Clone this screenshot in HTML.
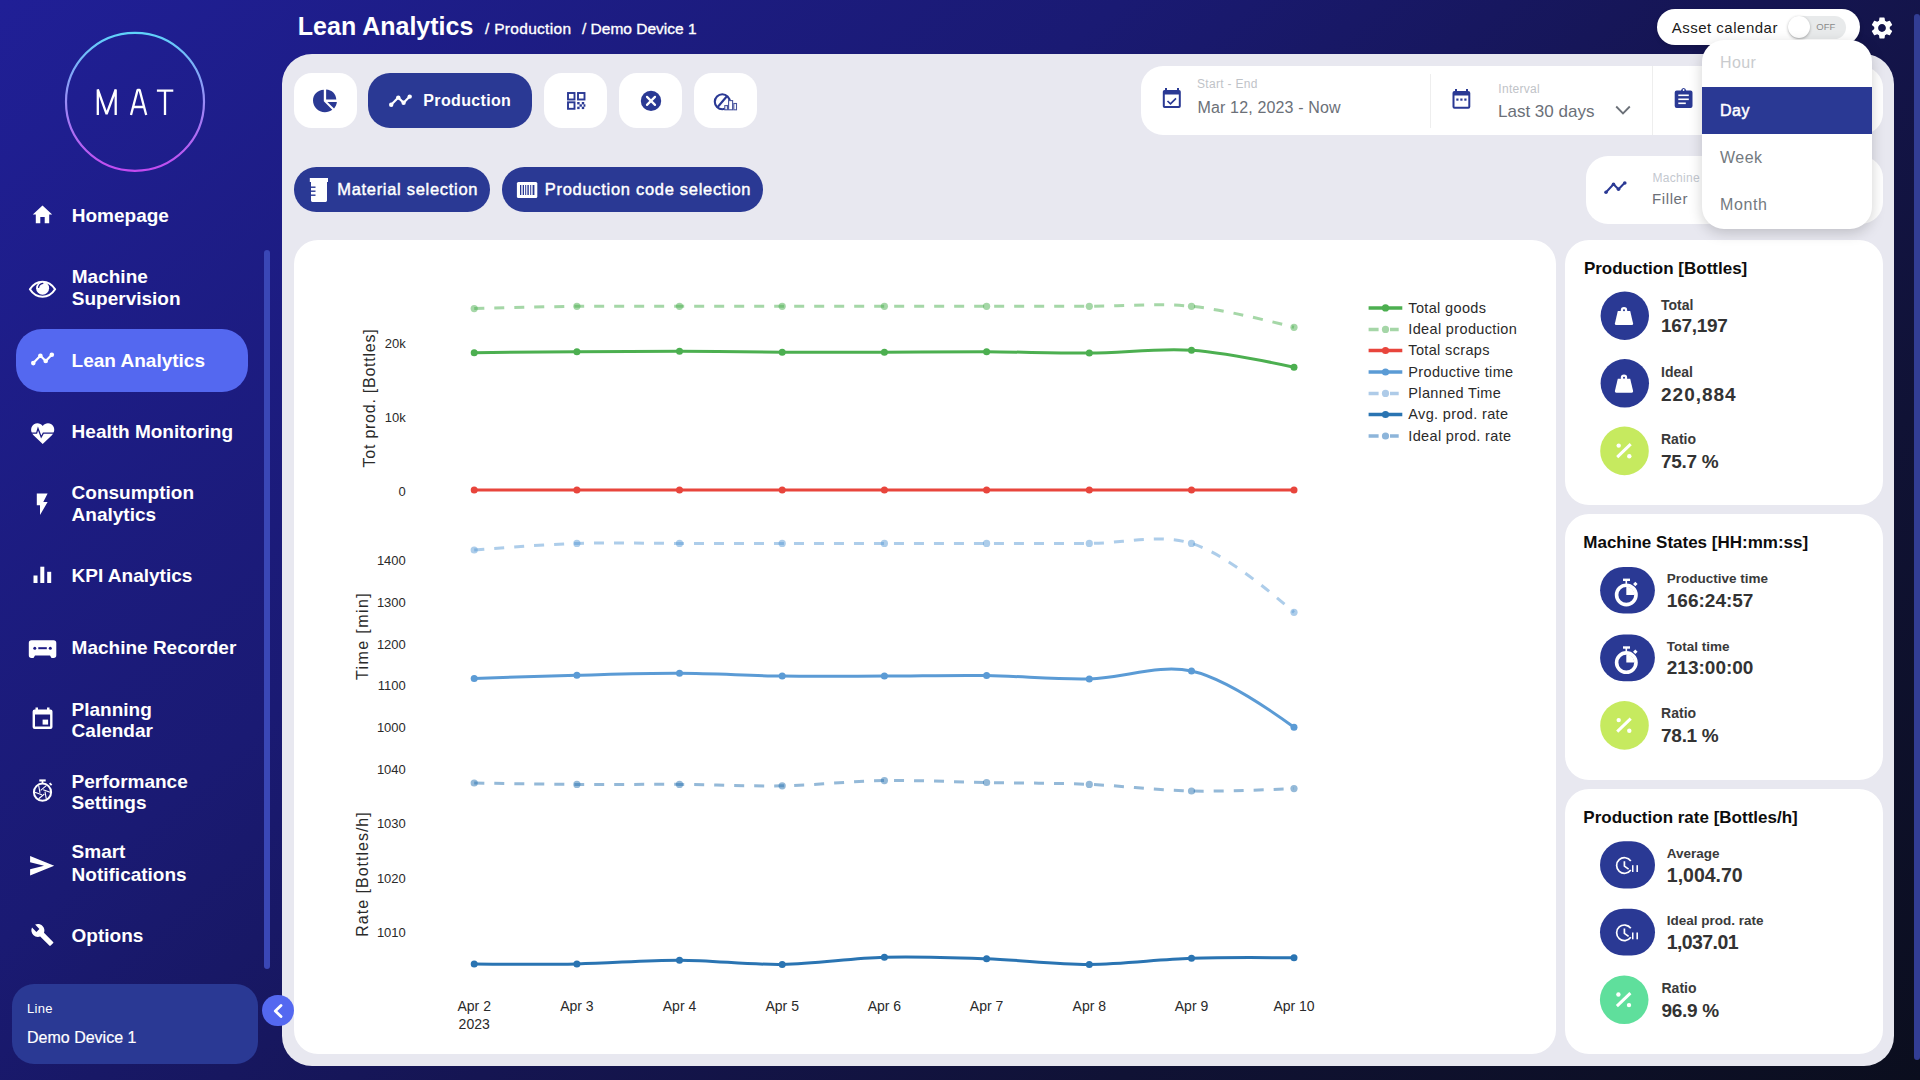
<!DOCTYPE html>
<html><head><meta charset="utf-8"><title>Lean Analytics</title>
<style>
*{margin:0;padding:0;box-sizing:border-box}
html,body{width:1920px;height:1080px;overflow:hidden}
body{position:relative;font-family:"Liberation Sans",sans-serif;background:linear-gradient(140deg,#201f96 0%,#1a1a73 35%,#151552 55%,#101235 75%,#0b0e1e 100%)}
.abs{position:absolute}
.t{position:absolute;white-space:nowrap;line-height:1}
.card{position:absolute;background:#fff;border-radius:20px}
.navy{background:#2a3994}
svg{overflow:visible}
</style></head><body>

<!-- ============ SIDEBAR ============ -->
<svg class="abs" style="left:0;top:0" width="282" height="1080">
  <defs>
    <linearGradient id="lg" x1="0" y1="0" x2="0" y2="1">
      <stop offset="0" stop-color="#5fd3fa"/><stop offset="0.5" stop-color="#9a8cf6"/><stop offset="1" stop-color="#c34af0"/>
    </linearGradient>
  </defs>
  <circle cx="135" cy="101.8" r="69" fill="none" stroke="url(#lg)" stroke-width="2.2"/>
  <g fill="none" stroke="#fff" stroke-width="2.3" stroke-linejoin="bevel">
    <path d="M97.8 115V89.5L106.6 114.2L115.7 89.5V115"/>
    <path d="M131 115L137.6 89.9H139.6L146.2 115M133.2 107H143.6"/>
    <path d="M156.9 90.6H173.3M165 90.6V115"/>
  </g>
</svg>

<div class="abs" style="left:16.3px;top:329px;width:231.5px;height:63px;border-radius:26px;background:#5468f0"></div>
<div class="abs" style="left:264px;top:250.4px;width:6px;height:719px;border-radius:3px;background:#3a47b6"></div>

<!-- nav icons -->
<svg class="abs" style="left:0;top:0" width="282" height="1080" fill="#fff">
  <!-- home -->
  <path d="M42.5 205.5L32.8 214.5H35.8V223.3H40.3V217H44.7V223.3H49.2V214.5H52.2Z"/>
  <!-- eye -->
  <path d="M29.9 289.3C34 283 38 281.8 42.5 281.8C47 281.8 51 283 55.1 289.3C51 295.6 47 296.8 42.5 296.8C38 296.8 34 295.6 29.9 289.3Z" fill="none" stroke="#fff" stroke-width="2.1" stroke-linejoin="round"/>
  <circle cx="42.6" cy="288.2" r="6.5"/>
  <path d="M38.6 287.4Q39 284 42.8 283.3" fill="none" stroke="#1e1c86" stroke-width="1.3" stroke-linecap="round"/>
  <!-- trend (active) -->
  <path d="M33.3 363.1L40.4 355.7L45.7 361L51.8 354.7" fill="none" stroke="#fff" stroke-width="2.2" stroke-linejoin="round"/>
  <circle cx="33.3" cy="363.1" r="2.3"/><circle cx="40.4" cy="355.7" r="2.3"/><circle cx="45.7" cy="361" r="2.3"/><circle cx="51.8" cy="354.7" r="2.3"/>
  <!-- heart -->
  <path d="M42.7 444L33.5 435.3C30 431.8 30.6 426.5 34 424.3C37 422.4 40.6 423.3 42.7 426C44.8 423.3 48.4 422.4 51.4 424.3C54.8 426.5 55.4 431.8 51.9 435.3Z"/>
  <path d="M30.5 433.2H36.6L38 428.6L41.2 437L43.3 433.2H55" fill="none" stroke="#1d1c82" stroke-width="1.3" stroke-linejoin="miter"/>
  <!-- bolt -->
  <path d="M36.8 493.5V505.3H40V515L47.6 502.1H43.3L47.6 493.5Z"/>
  <!-- kpi bars -->
  <rect x="33.5" y="575.5" width="4" height="7.5"/><rect x="40.3" y="566.7" width="4" height="16.3"/><rect x="47.2" y="571.8" width="4" height="11.2"/>
  <!-- recorder -->
  <path d="M31.5 640.2H53.6Q56.3 640.2 56.3 643V655.3Q56.3 658 53.6 658H51.5L50 655.5H35L33.5 658H31.5Q28.8 658 28.8 655.3V643Q28.8 640.2 31.5 640.2Z"/>
  <g fill="#1e1c86"><circle cx="34.8" cy="648.2" r="1.5"/><circle cx="50.3" cy="648.2" r="1.5"/><rect x="38.3" y="647.2" width="8.5" height="2"/></g>
  <!-- calendar -->
  <path d="M35.5 707.5H38V709.5H47V707.5H49.5V709.5H50.5Q52.5 709.5 52.5 711.5V726.9Q52.5 728.9 50.5 728.9H34.6Q32.6 728.9 32.6 726.9V711.5Q32.6 709.5 34.6 709.5H35.5ZM35 714.5V726.5H50.1V714.5Z"/>
  <rect x="42.6" y="719.6" width="5.5" height="5"/>
  <!-- perf stopwatch -->
  <rect x="39.3" y="779.4" width="6.4" height="2.1"/><rect x="41.7" y="781" width="1.6" height="2.5"/>
  <circle cx="42.5" cy="792.2" r="8.6" fill="none" stroke="#fff" stroke-width="2"/>
  <path d="M45.01 791.53L46.30 798.78M44.34 794.04L38.70 798.78M41.83 794.71L34.90 792.20M39.99 792.87L38.70 785.62M40.66 790.36L46.30 785.62M43.17 789.69L50.10 792.20" fill="none" stroke="#fff" stroke-width="1.1"/>
  <path d="M49.6 783.2L51.6 785.2" stroke="#fff" stroke-width="1.8"/>
  <!-- send -->
  <path d="M30.1 856.1L54.2 865.8L30.1 875.4V869.2L44 865.8L30.1 862.3Z"/>
  <!-- wrench -->
  <path transform="translate(30.4 922.9)" d="M22.7 19l-9.1-9.1c.9-2.3.4-5-1.5-6.9-2-2-5-2.4-7.4-1.3L9 6 6 9 1.6 4.7C.4 7.1.9 10.1 2.9 12.1c1.9 1.9 4.6 2.4 6.9 1.5l9.1 9.1c.4.4 1 .4 1.4 0l2.3-2.3c.5-.4.5-1.1.1-1.4z"/>
  <!-- collapse chevron button -->
</svg>

<div class="t" style="left:71.8px;top:206.1px;font-size:19px;color:#fff;font-weight:700;">Homepage</div>
<div class="t" style="left:71.8px;top:266.9px;font-size:19px;color:#fff;font-weight:700;">Machine</div>
<div class="t" style="left:71.8px;top:289.1px;font-size:19px;color:#fff;font-weight:700;">Supervision</div>
<div class="t" style="left:71.6px;top:350.8px;font-size:19px;color:#fff;font-weight:700;">Lean Analytics</div>
<div class="t" style="left:71.6px;top:421.9px;font-size:19px;color:#fff;font-weight:700;">Health Monitoring</div>
<div class="t" style="left:71.6px;top:483.3px;font-size:19px;color:#fff;font-weight:700;">Consumption</div>
<div class="t" style="left:71.6px;top:504.9px;font-size:19px;color:#fff;font-weight:700;">Analytics</div>
<div class="t" style="left:71.6px;top:566.0px;font-size:19px;color:#fff;font-weight:700;">KPI Analytics</div>
<div class="t" style="left:71.6px;top:638.0px;font-size:19px;color:#fff;font-weight:700;">Machine Recorder</div>
<div class="t" style="left:71.6px;top:699.7px;font-size:19px;color:#fff;font-weight:700;">Planning</div>
<div class="t" style="left:71.6px;top:721.1px;font-size:19px;color:#fff;font-weight:700;">Calendar</div>
<div class="t" style="left:71.6px;top:771.5px;font-size:19px;color:#fff;font-weight:700;">Performance</div>
<div class="t" style="left:71.6px;top:793.1px;font-size:19px;color:#fff;font-weight:700;">Settings</div>
<div class="t" style="left:71.6px;top:842.4px;font-size:19px;color:#fff;font-weight:700;">Smart</div>
<div class="t" style="left:71.6px;top:864.6px;font-size:19px;color:#fff;font-weight:700;">Notifications</div>
<div class="t" style="left:71.6px;top:925.5px;font-size:19px;color:#fff;font-weight:700;">Options</div>

<div class="abs" style="left:12.2px;top:983.8px;width:245.6px;height:80px;border-radius:22px;background:#2a3994"></div>
<div class="t" style="left:27.0px;top:1002.0px;font-size:13px;color:#fff;font-weight:400;letter-spacing:0.3px;">Line</div>
<div class="t" style="left:27.0px;top:1029.5px;font-size:16px;color:#fff;font-weight:400;-webkit-text-stroke:0.2px #fff;">Demo Device 1</div>

<!-- ============ HEADER ============ -->
<div class="t" style="left:297.8px;top:14.0px;font-size:25px;color:#fff;font-weight:700;">Lean Analytics</div>
<div class="t" style="left:485.0px;top:20.5px;font-size:15.5px;color:#fff;font-weight:400;letter-spacing:0.3px;-webkit-text-stroke:0.35px #fff;">/ Production</div>
<div class="t" style="left:582.0px;top:20.5px;font-size:15.5px;color:#fff;font-weight:400;-webkit-text-stroke:0.35px #fff;">/ Demo Device 1</div>

<div class="abs" style="left:1657px;top:8.8px;width:203px;height:36px;border-radius:18px;background:#fff;box-shadow:0 2px 4px rgba(0,0,0,.15)"></div>
<div class="t" style="left:1671.7px;top:19.5px;font-size:15px;color:#1a1a1a;font-weight:400;letter-spacing:0.5px;">Asset calendar</div>
<div class="abs" style="left:1788px;top:15.6px;width:58px;height:23px;border-radius:12px;background:#e8eaeb"></div>
<div class="abs" style="left:1788px;top:16px;width:22px;height:22px;border-radius:11px;background:#fff;box-shadow:0 1px 3px rgba(0,0,0,.3)"></div>
<div class="t" style="left:1816.3px;top:22.0px;font-size:9.5px;color:#8a8a8a;font-weight:400;">OFF</div>
<svg class="abs" style="left:1869px;top:15.3px" width="26" height="26" viewBox="0 0 24 24" fill="#fff">
  <path d="M19.14 12.94c.04-.3.06-.61.06-.94 0-.32-.02-.64-.07-.94l2.03-1.58a.49.49 0 0 0 .12-.61l-1.92-3.32a.488.488 0 0 0-.59-.22l-2.39.96c-.5-.38-1.03-.7-1.62-.94l-.36-2.54a.484.484 0 0 0-.48-.41h-3.84c-.24 0-.43.17-.47.41l-.36 2.54c-.59.24-1.13.57-1.62.94l-2.39-.96c-.22-.08-.47 0-.59.22L2.74 8.87c-.12.21-.08.47.12.61l2.03 1.58c-.05.3-.09.63-.09.94s.02.64.07.94l-2.03 1.58a.49.49 0 0 0-.12.61l1.92 3.32c.12.22.37.29.59.22l2.39-.96c.5.38 1.03.7 1.62.94l.36 2.54c.05.24.24.41.48.41h3.84c.24 0 .44-.17.47-.41l.36-2.54c.59-.24 1.13-.56 1.62-.94l2.39.96c.22.08.47 0 .59-.22l1.92-3.32c.12-.22.07-.47-.12-.61l-2.01-1.58zM12 15.6c-1.98 0-3.6-1.62-3.6-3.6s1.62-3.6 3.6-3.6 3.6 1.62 3.6 3.6-1.62 3.6-3.6 3.6z"/>
</svg>

<!-- page scrollbar -->
<div class="abs" style="left:1913.5px;top:14px;width:6.5px;height:1046px;border-radius:3px;background:#323d94"></div>

<!-- ============ MAIN PANEL ============ -->
<div class="abs" style="left:281.8px;top:54px;width:1612.2px;height:1012px;border-radius:30px;background:#e8e8f0"></div>

<!-- collapse button -->
<div class="abs" style="left:262.2px;top:994.8px;width:31.5px;height:31.5px;border-radius:50%;background:#5468f0"></div>
<svg class="abs" style="left:0;top:0" width="300" height="1080"><path d="M281 1005.5L275.3 1011L281 1016.5" fill="none" stroke="#fff" stroke-width="2.8" stroke-linecap="round" stroke-linejoin="round"/></svg>

<!-- top toolbar buttons -->
<div class="card" style="left:294px;top:73px;width:63px;height:54.7px;border-radius:18px"></div>
<div class="card navy" style="left:367.8px;top:73px;width:164px;height:54.7px;border-radius:22px"></div>
<div class="card" style="left:544px;top:73px;width:63px;height:54.7px;border-radius:18px"></div>
<div class="card" style="left:619px;top:73px;width:62.7px;height:54.7px;border-radius:18px"></div>
<div class="card" style="left:694px;top:73px;width:62.7px;height:54.7px;border-radius:18px"></div>
<svg class="abs" style="left:0;top:0" width="800" height="240">
  <!-- pie -->
  <g fill="#2a3994">
    <path d="M323.8 89.8V101.2L332.3 109.7C330.3 111.3 327.6 112.2 324.9 112.2C318.4 112.2 313 106.9 313 100.4C313 94.7 317.6 90.2 323.8 89.8Z"/>
    <path d="M326.1 89.4C331.9 89.6 336.1 94 336.3 99.6H326.1Z"/>
    <path d="M327.4 101.9H336.9C336.6 104.4 335.6 106.6 334 108.5Z"/>
  </g>
  <!-- production trend icon -->
  <path d="M391.2 104.8L398.3 97.6L403.6 102.8L409.7 96.6" fill="none" stroke="#fff" stroke-width="2.2" stroke-linejoin="round"/>
  <g fill="#fff"><circle cx="391.2" cy="104.8" r="2.2"/><circle cx="398.3" cy="97.6" r="2.2"/><circle cx="403.6" cy="102.8" r="2.2"/><circle cx="409.7" cy="96.6" r="2.2"/></g>
  <!-- qr -->
  <g fill="none" stroke="#2a3994" stroke-width="1.9">
    <rect x="568" y="93" width="6.5" height="6.5"/><rect x="578" y="93" width="6.5" height="6.5"/><rect x="568" y="102.3" width="6.5" height="6.5"/>
  </g>
  <g fill="#2a3994"><rect x="577.2" y="102" width="2.4" height="2.4"/><rect x="581.8" y="102" width="2.4" height="2.4"/><rect x="579.5" y="104.3" width="2.4" height="2.4"/><rect x="577.2" y="106.7" width="2.4" height="2.4"/><rect x="581.8" y="106.7" width="2.4" height="2.4"/><rect x="583.6" y="104.3" width="1.8" height="2.4"/></g>
  <!-- x circle -->
  <circle cx="651" cy="100.9" r="10.2" fill="#2a3994"/>
  <path d="M647 96.9L655 104.9M655 96.9L647 104.9" stroke="#fff" stroke-width="2.2" stroke-linecap="round"/>
  <!-- speed/bars icon -->
  <g fill="none" stroke="#2a3994" stroke-width="2.1"><circle cx="722.3" cy="101.8" r="7.5"/><path d="M717.7 107L726.9 96.3"/></g>
  <g fill="#fff" stroke="#4a569f" stroke-width="1.1"><rect x="724.8" y="105.6" width="2.6" height="4.2"/><rect x="728.6" y="100.6" width="4" height="9.2"/><rect x="733.8" y="103.5" width="2.7" height="6.3"/></g>
</svg>
<div class="t" style="left:423.3px;top:93.3px;font-size:16px;color:#fff;font-weight:700;letter-spacing:0.35px;">Production</div>

<!-- material buttons -->
<div class="card navy" style="left:294px;top:167px;width:195.5px;height:44.6px;border-radius:22.3px"></div>
<div class="card navy" style="left:502px;top:167px;width:261px;height:44.6px;border-radius:22.3px"></div>
<svg class="abs" style="left:0;top:0" width="800" height="240" fill="#fff">
  <path d="M309.8 178H328V182H327V200.6Q327 202 325.6 202H312.4Q311 202 311 200.6V182H309.8Z"/>
  <g fill="#2a3994"><rect x="311" y="186.5" width="4.5" height="1.4"/><rect x="311" y="190.5" width="4.5" height="1.4"/><rect x="311" y="194.5" width="4.5" height="1.4"/></g>
  <rect x="516.9" y="181.9" width="20.4" height="16" rx="1.5"/>
  <g fill="#2a3994"><rect x="520" y="185" width="1.3" height="10"/><rect x="522.7" y="185" width="1.3" height="10"/><rect x="525.2" y="185" width="1" height="10"/><rect x="527.4" y="185" width="1.4" height="10"/><rect x="530.2" y="185" width="1" height="10"/><rect x="532.6" y="185" width="1.8" height="10"/></g>
</svg>
<div class="t" style="left:337.2px;top:180.9px;font-size:16.5px;color:#fff;font-weight:400;letter-spacing:0.7px;-webkit-text-stroke:0.45px #fff;">Material selection</div>
<div class="t" style="left:544.8px;top:180.9px;font-size:16.5px;color:#fff;font-weight:400;letter-spacing:0.7px;-webkit-text-stroke:0.45px #fff;">Production code selection</div>

<!-- date filter card -->
<div class="card" style="left:1141.3px;top:66.3px;width:741.5px;height:69px;border-radius:22px"></div>
<div class="abs" style="left:1430.3px;top:74px;width:1.2px;height:53.5px;background:#eeeeee"></div>
<div class="abs" style="left:1652px;top:66.3px;width:1.2px;height:69px;background:#eeeeee"></div>
<svg class="abs" style="left:0;top:0" width="1920" height="240">
  <!-- calendar check -->
  <g fill="#2a3994">
    <path d="M1165 88H1167V90H1177V88H1179V90Q1180.8 90 1180.8 91.8V106.2Q1180.8 108 1179 108H1164.6Q1162.8 108 1162.8 106.2V91.8Q1162.8 90 1164.6 90H1165ZM1164.8 94.5V106H1178.8V94.5Z"/>
  </g>
  <path d="M1167.5 101L1170.5 103.8L1176 98.3" fill="none" stroke="#2a3994" stroke-width="1.7"/>
  <!-- calendar dots -->
  <path fill="#2a3994" d="M1455 89H1457V91H1466V89H1468V91Q1470.3 91 1470.3 93V106.7Q1470.3 108.7 1468.3 108.7H1454.5Q1452.5 108.7 1452.5 106.7V93Q1452.5 91 1454.5 91H1455ZM1454.5 95.5V106.7H1468.3V95.5Z"/>
  <g fill="#2a3994"><rect x="1456.3" y="98.5" width="2.2" height="2.2"/><rect x="1460.3" y="98.5" width="2.2" height="2.2"/><rect x="1464.3" y="98.5" width="2.2" height="2.2"/></g>
  <path d="M1616.2 106.5L1623 113.5L1629.8 106.5" fill="none" stroke="#6b7078" stroke-width="1.8"/>
  <!-- clipboard -->
  <path fill="#2a3994" d="M1681 90.5Q1681.5 88 1683.6 88Q1685.7 88 1686.2 90.5H1690.5Q1692.5 90.5 1692.5 92.5V106Q1692.5 108 1690.5 108H1676.7Q1674.7 108 1674.7 106V92.5Q1674.7 90.5 1676.7 90.5Z"/>
  <g fill="#fff"><rect x="1678.3" y="94.5" width="10.5" height="1.6"/><rect x="1678.3" y="98.5" width="10.5" height="1.6"/><rect x="1678.3" y="102.5" width="7.5" height="1.6"/><circle cx="1683.6" cy="90" r="0.9"/></g>
</svg>
<div class="t" style="left:1197.0px;top:77.8px;font-size:12px;color:#bfc3c8;font-weight:400;letter-spacing:0.3px;">Start - End</div>
<div class="t" style="left:1197.5px;top:99.5px;font-size:16px;color:#6b7078;font-weight:400;letter-spacing:0.15px;">Mar 12, 2023 - Now</div>
<div class="t" style="left:1498.3px;top:83.1px;font-size:12px;color:#bfc3c8;font-weight:400;letter-spacing:0.3px;">Interval</div>
<div class="t" style="left:1498.0px;top:102.6px;font-size:17px;color:#6b7078;font-weight:400;">Last 30 days</div>

<!-- machine card -->
<div class="card" style="left:1585.8px;top:155.8px;width:297px;height:68px;border-radius:22px"></div>
<svg class="abs" style="left:0;top:0" width="1920" height="240">
  <path d="M1606 192.3L1613.5 184.3L1618.5 189.2L1624.5 183" fill="none" stroke="#2a3994" stroke-width="2" stroke-linejoin="round"/>
  <g fill="#2a3994"><circle cx="1606" cy="192.3" r="1.8"/><circle cx="1613.5" cy="184.3" r="1.8"/><circle cx="1618.5" cy="189.2" r="1.8"/><circle cx="1624.8" cy="183" r="1.8"/></g>
</svg>
<div class="t" style="left:1652.5px;top:171.5px;font-size:12px;color:#c3c8cf;font-weight:400;letter-spacing:0.3px;">Machine</div>
<div class="t" style="left:1652.0px;top:191.3px;font-size:15px;color:#6b7078;font-weight:400;letter-spacing:0.6px;">Filler</div>

<!-- chart card -->
<div class="card" style="left:294px;top:240px;width:1262px;height:813.6px;border-radius:24px"></div>
<svg class="abs" style="left:0;top:0" width="1920" height="1080"><path d="M474.20,352.70Q542.67,351.93 576.90,351.70C611.11,351.47 645.29,351.22 679.50,351.30C713.73,351.38 748.01,352.05 782.20,352.20C816.31,352.35 850.33,352.28 884.40,352.20C918.47,352.12 952.49,351.55 986.60,351.70C1020.79,351.85 1055.11,353.34 1089.30,353.10C1123.41,352.87 1157.52,347.99 1191.50,350.30Q1225.75,352.63 1294.00,367.20" fill="none" stroke="#4caf50" stroke-width="3"/><circle cx="474.2" cy="352.7" r="3.5" fill="#4caf50"/><circle cx="576.9" cy="351.7" r="3.5" fill="#4caf50"/><circle cx="679.5" cy="351.3" r="3.5" fill="#4caf50"/><circle cx="782.2" cy="352.2" r="3.5" fill="#4caf50"/><circle cx="884.4" cy="352.2" r="3.5" fill="#4caf50"/><circle cx="986.6" cy="351.7" r="3.5" fill="#4caf50"/><circle cx="1089.3" cy="353.1" r="3.5" fill="#4caf50"/><circle cx="1191.5" cy="350.3" r="3.5" fill="#4caf50"/><circle cx="1294.0" cy="367.2" r="3.5" fill="#4caf50"/><path d="M474.20,308.60Q542.67,306.68 576.90,306.30C611.11,305.92 645.29,306.30 679.50,306.30C713.72,306.30 748.01,306.30 782.20,306.30C816.31,306.30 850.33,306.30 884.40,306.30C918.47,306.30 952.49,306.30 986.60,306.30C1020.79,306.30 1055.11,306.30 1089.30,306.30C1123.41,306.30 1157.58,302.86 1191.50,306.30Q1225.82,309.78 1294.00,327.30" fill="none" stroke="#4caf50" stroke-opacity="0.5" stroke-width="3" stroke-dasharray="10 10"/><circle cx="474.2" cy="308.6" r="3.6" fill="#4caf50" fill-opacity="0.5"/><circle cx="576.9" cy="306.3" r="3.6" fill="#4caf50" fill-opacity="0.5"/><circle cx="679.5" cy="306.3" r="3.6" fill="#4caf50" fill-opacity="0.5"/><circle cx="782.2" cy="306.3" r="3.6" fill="#4caf50" fill-opacity="0.5"/><circle cx="884.4" cy="306.3" r="3.6" fill="#4caf50" fill-opacity="0.5"/><circle cx="986.6" cy="306.3" r="3.6" fill="#4caf50" fill-opacity="0.5"/><circle cx="1089.3" cy="306.3" r="3.6" fill="#4caf50" fill-opacity="0.5"/><circle cx="1191.5" cy="306.3" r="3.6" fill="#4caf50" fill-opacity="0.5"/><circle cx="1294.0" cy="327.3" r="3.6" fill="#4caf50" fill-opacity="0.5"/><path d="M474.20,490.00Q542.68,490.00 576.90,490.00C611.11,490.00 645.29,490.00 679.50,490.00C713.72,490.00 748.01,490.00 782.20,490.00C816.31,490.00 850.33,490.00 884.40,490.00C918.47,490.00 952.49,490.00 986.60,490.00C1020.79,490.00 1055.11,490.00 1089.30,490.00C1123.41,490.00 1157.41,490.00 1191.50,490.00Q1225.64,490.00 1294.00,490.00" fill="none" stroke="#e8453c" stroke-width="3"/><circle cx="474.2" cy="490" r="3.5" fill="#e8453c"/><circle cx="576.9" cy="490" r="3.5" fill="#e8453c"/><circle cx="679.5" cy="490" r="3.5" fill="#e8453c"/><circle cx="782.2" cy="490" r="3.5" fill="#e8453c"/><circle cx="884.4" cy="490" r="3.5" fill="#e8453c"/><circle cx="986.6" cy="490" r="3.5" fill="#e8453c"/><circle cx="1089.3" cy="490" r="3.5" fill="#e8453c"/><circle cx="1191.5" cy="490" r="3.5" fill="#e8453c"/><circle cx="1294.0" cy="490" r="3.5" fill="#e8453c"/><path d="M474.20,678.40Q542.67,676.05 576.90,675.20C611.11,674.35 645.29,673.15 679.50,673.30C713.73,673.45 748.01,675.63 782.20,676.10C816.31,676.56 850.33,676.18 884.40,676.10C918.47,676.02 952.50,675.14 986.60,675.60C1020.80,676.07 1055.13,679.67 1089.30,678.90C1123.43,678.13 1158.44,663.88 1191.50,671.00Q1226.81,678.61 1294.00,727.20" fill="none" stroke="#5b9bd5" stroke-width="3"/><circle cx="474.2" cy="678.4" r="3.5" fill="#5b9bd5"/><circle cx="576.9" cy="675.2" r="3.5" fill="#5b9bd5"/><circle cx="679.5" cy="673.3" r="3.5" fill="#5b9bd5"/><circle cx="782.2" cy="676.1" r="3.5" fill="#5b9bd5"/><circle cx="884.4" cy="676.1" r="3.5" fill="#5b9bd5"/><circle cx="986.6" cy="675.6" r="3.5" fill="#5b9bd5"/><circle cx="1089.3" cy="678.9" r="3.5" fill="#5b9bd5"/><circle cx="1191.5" cy="671.0" r="3.5" fill="#5b9bd5"/><circle cx="1294.0" cy="727.2" r="3.5" fill="#5b9bd5"/><path d="M474.20,550.00Q542.66,544.50 576.90,543.40C611.09,542.30 645.29,543.40 679.50,543.40C713.72,543.40 748.01,543.40 782.20,543.40C816.31,543.40 850.33,543.40 884.40,543.40C918.47,543.40 952.49,543.40 986.60,543.40C1020.79,543.40 1055.11,543.40 1089.30,543.40C1123.41,543.40 1158.86,533.45 1191.50,543.40Q1227.39,554.34 1294.00,612.30" fill="none" stroke="#5b9bd5" stroke-opacity="0.5" stroke-width="3" stroke-dasharray="10 10"/><circle cx="474.2" cy="550.0" r="3.6" fill="#5b9bd5" fill-opacity="0.5"/><circle cx="576.9" cy="543.4" r="3.6" fill="#5b9bd5" fill-opacity="0.5"/><circle cx="679.5" cy="543.4" r="3.6" fill="#5b9bd5" fill-opacity="0.5"/><circle cx="782.2" cy="543.4" r="3.6" fill="#5b9bd5" fill-opacity="0.5"/><circle cx="884.4" cy="543.4" r="3.6" fill="#5b9bd5" fill-opacity="0.5"/><circle cx="986.6" cy="543.4" r="3.6" fill="#5b9bd5" fill-opacity="0.5"/><circle cx="1089.3" cy="543.4" r="3.6" fill="#5b9bd5" fill-opacity="0.5"/><circle cx="1191.5" cy="543.4" r="3.6" fill="#5b9bd5" fill-opacity="0.5"/><circle cx="1294.0" cy="612.3" r="3.6" fill="#5b9bd5" fill-opacity="0.5"/><path d="M474.20,963.90Q542.68,964.52 576.90,963.90C611.11,963.28 645.29,960.12 679.50,960.20C713.73,960.28 748.02,964.89 782.20,964.40C816.32,963.91 850.31,958.23 884.40,957.30C918.45,956.37 952.50,957.62 986.60,958.80C1020.80,959.98 1055.11,964.49 1089.30,964.40C1123.41,964.31 1157.39,959.40 1191.50,958.30Q1225.63,957.20 1294.00,957.80" fill="none" stroke="#2a74b2" stroke-width="3"/><circle cx="474.2" cy="963.9" r="3.5" fill="#2a74b2"/><circle cx="576.9" cy="963.9" r="3.5" fill="#2a74b2"/><circle cx="679.5" cy="960.2" r="3.5" fill="#2a74b2"/><circle cx="782.2" cy="964.4" r="3.5" fill="#2a74b2"/><circle cx="884.4" cy="957.3" r="3.5" fill="#2a74b2"/><circle cx="986.6" cy="958.8" r="3.5" fill="#2a74b2"/><circle cx="1089.3" cy="964.4" r="3.5" fill="#2a74b2"/><circle cx="1191.5" cy="958.3" r="3.5" fill="#2a74b2"/><circle cx="1294.0" cy="957.8" r="3.5" fill="#2a74b2"/><path d="M474.20,783.00Q542.67,784.17 576.90,784.40C611.11,784.63 645.29,784.17 679.50,784.40C713.73,784.63 748.02,786.44 782.20,785.80C816.32,785.17 850.32,781.15 884.40,780.60C918.46,780.05 952.49,781.87 986.60,782.50C1020.79,783.13 1055.12,782.98 1089.30,784.40C1123.42,785.82 1157.39,790.30 1191.50,791.00Q1225.63,791.70 1294.00,788.60" fill="none" stroke="#2a74b2" stroke-opacity="0.5" stroke-width="3" stroke-dasharray="10 10"/><circle cx="474.2" cy="783.0" r="3.6" fill="#2a74b2" fill-opacity="0.5"/><circle cx="576.9" cy="784.4" r="3.6" fill="#2a74b2" fill-opacity="0.5"/><circle cx="679.5" cy="784.4" r="3.6" fill="#2a74b2" fill-opacity="0.5"/><circle cx="782.2" cy="785.8" r="3.6" fill="#2a74b2" fill-opacity="0.5"/><circle cx="884.4" cy="780.6" r="3.6" fill="#2a74b2" fill-opacity="0.5"/><circle cx="986.6" cy="782.5" r="3.6" fill="#2a74b2" fill-opacity="0.5"/><circle cx="1089.3" cy="784.4" r="3.6" fill="#2a74b2" fill-opacity="0.5"/><circle cx="1191.5" cy="791.0" r="3.6" fill="#2a74b2" fill-opacity="0.5"/><circle cx="1294.0" cy="788.6" r="3.6" fill="#2a74b2" fill-opacity="0.5"/><path d="M1368.6 307.9H1402.3" stroke="#4caf50" stroke-width="3.5"/><circle cx="1385.5" cy="307.9" r="3.6" fill="#4caf50"/><path d="M1368.6 329.4H1378.6M1390 329.4H1398.7" stroke="#a5d6a7" stroke-width="3.5"/><circle cx="1385.5" cy="329.4" r="3.6" fill="#a5d6a7"/><path d="M1368.6 350.5H1402.3" stroke="#e8453c" stroke-width="3.5"/><circle cx="1385.5" cy="350.5" r="3.6" fill="#e8453c"/><path d="M1368.6 372.0H1402.3" stroke="#5b9bd5" stroke-width="3.5"/><circle cx="1385.5" cy="372.0" r="3.6" fill="#5b9bd5"/><path d="M1368.6 393.4H1378.6M1390 393.4H1398.7" stroke="#aecbe8" stroke-width="3.5"/><circle cx="1385.5" cy="393.4" r="3.6" fill="#aecbe8"/><path d="M1368.6 414.5H1402.3" stroke="#2a74b2" stroke-width="3.5"/><circle cx="1385.5" cy="414.5" r="3.6" fill="#2a74b2"/><path d="M1368.6 436.0H1378.6M1390 436.0H1398.7" stroke="#8db5da" stroke-width="3.5"/><circle cx="1385.5" cy="436.0" r="3.6" fill="#8db5da"/></svg>
<div class="t" style="left:1408.3px;top:300.6px;font-size:14.5px;color:#2a2a2a;font-weight:400;letter-spacing:0.35px;">Total goods</div><div class="t" style="left:1408.3px;top:322.1px;font-size:14.5px;color:#2a2a2a;font-weight:400;letter-spacing:0.35px;">Ideal production</div><div class="t" style="left:1408.3px;top:343.2px;font-size:14.5px;color:#2a2a2a;font-weight:400;letter-spacing:0.35px;">Total scraps</div><div class="t" style="left:1408.3px;top:364.7px;font-size:14.5px;color:#2a2a2a;font-weight:400;letter-spacing:0.35px;">Productive time</div><div class="t" style="left:1408.3px;top:386.1px;font-size:14.5px;color:#2a2a2a;font-weight:400;letter-spacing:0.35px;">Planned Time</div><div class="t" style="left:1408.3px;top:407.2px;font-size:14.5px;color:#2a2a2a;font-weight:400;letter-spacing:0.35px;">Avg. prod. rate</div><div class="t" style="left:1408.3px;top:428.7px;font-size:14.5px;color:#2a2a2a;font-weight:400;letter-spacing:0.35px;">Ideal prod. rate</div><div class="t" style="right:1514.2px;top:336.5px;font-size:13px;color:#2a2a2a;font-weight:400;">20k</div><div class="t" style="right:1514.2px;top:410.7px;font-size:13px;color:#2a2a2a;font-weight:400;">10k</div><div class="t" style="right:1514.2px;top:484.5px;font-size:13px;color:#2a2a2a;font-weight:400;">0</div><div class="t" style="right:1514.2px;top:553.5px;font-size:13px;color:#2a2a2a;font-weight:400;">1400</div><div class="t" style="right:1514.2px;top:595.5px;font-size:13px;color:#2a2a2a;font-weight:400;">1300</div><div class="t" style="right:1514.2px;top:637.5px;font-size:13px;color:#2a2a2a;font-weight:400;">1200</div><div class="t" style="right:1514.2px;top:678.5px;font-size:13px;color:#2a2a2a;font-weight:400;">1100</div><div class="t" style="right:1514.2px;top:720.5px;font-size:13px;color:#2a2a2a;font-weight:400;">1000</div><div class="t" style="right:1514.2px;top:762.5px;font-size:13px;color:#2a2a2a;font-weight:400;">1040</div><div class="t" style="right:1514.2px;top:816.5px;font-size:13px;color:#2a2a2a;font-weight:400;">1030</div><div class="t" style="right:1514.2px;top:871.5px;font-size:13px;color:#2a2a2a;font-weight:400;">1020</div><div class="t" style="right:1514.2px;top:925.5px;font-size:13px;color:#2a2a2a;font-weight:400;">1010</div><div class="t" style="left:424.2px;width:100px;text-align:center;top:998.9px;font-size:14px;color:#2a2a2a">Apr 2</div><div class="t" style="left:526.9px;width:100px;text-align:center;top:998.9px;font-size:14px;color:#2a2a2a">Apr 3</div><div class="t" style="left:629.5px;width:100px;text-align:center;top:998.9px;font-size:14px;color:#2a2a2a">Apr 4</div><div class="t" style="left:732.2px;width:100px;text-align:center;top:998.9px;font-size:14px;color:#2a2a2a">Apr 5</div><div class="t" style="left:834.4px;width:100px;text-align:center;top:998.9px;font-size:14px;color:#2a2a2a">Apr 6</div><div class="t" style="left:936.6px;width:100px;text-align:center;top:998.9px;font-size:14px;color:#2a2a2a">Apr 7</div><div class="t" style="left:1039.3px;width:100px;text-align:center;top:998.9px;font-size:14px;color:#2a2a2a">Apr 8</div><div class="t" style="left:1141.5px;width:100px;text-align:center;top:998.9px;font-size:14px;color:#2a2a2a">Apr 9</div><div class="t" style="left:1244.0px;width:100px;text-align:center;top:998.9px;font-size:14px;color:#2a2a2a">Apr 10</div><div class="t" style="left:424.2px;width:100px;text-align:center;top:1016.7px;font-size:14px;color:#2a2a2a">2023</div><div class="t" style="left:220.0px;top:390.3px;width:300px;text-align:center;font-size:16px;line-height:16px;color:#2a2a2a;letter-spacing:0.75px;transform:rotate(-90deg);transform-origin:150px 8.0px">Tot prod. [Bottles]</div><div class="t" style="left:213.0px;top:628.3px;width:300px;text-align:center;font-size:16px;line-height:16px;color:#2a2a2a;letter-spacing:1.4px;transform:rotate(-90deg);transform-origin:150px 8.0px">Time [min]</div><div class="t" style="left:213.0px;top:865.5px;width:300px;text-align:center;font-size:16px;line-height:16px;color:#2a2a2a;letter-spacing:1.0px;transform:rotate(-90deg);transform-origin:150px 8.0px">Rate [Bottles/h]</div>

<!-- right cards -->
<div class="card" style="left:1565px;top:240px;width:318px;height:264.5px;border-radius:24px"></div>
<div class="card" style="left:1565px;top:513.9px;width:318px;height:265.7px;border-radius:24px"></div>
<div class="card" style="left:1565px;top:789px;width:318px;height:264.6px;border-radius:24px"></div>

<svg class="abs" style="left:0;top:0" width="1920" height="1080">
<g fill="#2a3994"><circle cx="1624.8" cy="315.7" r="24.2"/><circle cx="1624.8" cy="383.3" r="24.2"/><rect x="1600.1" y="567.1" width="54.8" height="46.5" rx="23.25"/><rect x="1600.1" y="634.4" width="54.8" height="46.8" rx="23.4"/><rect x="1600" y="841.2" width="55" height="47.4" rx="23.7"/><rect x="1600" y="908.8" width="55" height="46.8" rx="23.4"/></g><circle cx="1624.5" cy="450.9" r="24.3" fill="#c6ea5f"/><circle cx="1624.5" cy="725.4" r="24.3" fill="#c6ea5f"/><circle cx="1624.2" cy="999.8" r="24.3" fill="#5fdf9c"/><g fill="#fff"><path d="M1617.8 311.1H1630.2L1633.1 323.4Q1633.4 325.1 1631.6 325.1H1616.4Q1614.6 325.1 1614.9 323.4Z"/><circle cx="1624.0" cy="310.2" r="3.2"/><circle cx="1624.0" cy="310.2" r="1" fill="#2a3994"/><path d="M1617.8 378.7H1630.2L1633.1 391.0Q1633.4 392.7 1631.6 392.7H1616.4Q1614.6 392.7 1614.9 391.0Z"/><circle cx="1624.0" cy="377.8" r="3.2"/><circle cx="1624.0" cy="377.8" r="1" fill="#2a3994"/><path d="M1617.2 457.2L1630.7 444.2" stroke="#fff" stroke-width="3"/><circle cx="1618.7" cy="445.6" r="2.2"/><circle cx="1629.3" cy="456.2" r="2.2"/><path d="M1617.2 731.7L1630.7 718.7" stroke="#fff" stroke-width="3"/><circle cx="1618.7" cy="720.1" r="2.2"/><circle cx="1629.3" cy="730.7" r="2.2"/><path d="M1616.9 1006.1L1630.4 993.1" stroke="#fff" stroke-width="3"/><circle cx="1618.4" cy="994.5" r="2.2"/><circle cx="1629.0" cy="1005.1" r="2.2"/><circle cx="1626.3" cy="594.9" r="9.7" fill="none" stroke="#fff" stroke-width="3.6"/><path d="M1626.3 594.9V586.7A8.2 8.2 0 0 1 1634.5 594.9Z"/><rect x="1623.0" y="578.6" width="7" height="2.4"/><rect x="1625.5" y="579.9" width="1.6" height="4"/><rect x="1633.7" y="582.4" width="3.2" height="3.2" transform="rotate(45 1635.3 584.0)"/><circle cx="1626.3" cy="662.6" r="9.7" fill="none" stroke="#fff" stroke-width="3.6"/><path d="M1626.3 662.6V654.4A8.2 8.2 0 0 1 1634.5 662.6Z"/><rect x="1623.0" y="646.3" width="7" height="2.4"/><rect x="1625.5" y="647.6" width="1.6" height="4"/><rect x="1633.7" y="650.1" width="3.2" height="3.2" transform="rotate(45 1635.3 651.7)"/><path d="M1630.8 861.0A7.8 7.8 0 1 0 1630.8 870.0" fill="none" stroke="#fff" stroke-width="1.7"/><path d="M1624.4 861.2V866.1L1628.6 869.1" fill="none" stroke="#fff" stroke-width="1.7"/><rect x="1632.0" y="865.2" width="1.5" height="6.8"/><rect x="1636.4" y="865.2" width="1.6" height="6.8"/><path d="M1630.8 928.3A7.8 7.8 0 1 0 1630.8 937.3" fill="none" stroke="#fff" stroke-width="1.7"/><path d="M1624.4 928.5V933.4L1628.6 936.4" fill="none" stroke="#fff" stroke-width="1.7"/><rect x="1632.0" y="932.5" width="1.5" height="6.8"/><rect x="1636.4" y="932.5" width="1.6" height="6.8"/></g></svg>

<div class="t" style="left:1583.9px;top:259.6px;font-size:17px;color:#0d0d0d;font-weight:700;">Production [Bottles]</div>
<div class="t" style="left:1661.0px;top:297.6px;font-size:14px;color:#3a3a3a;font-weight:700;">Total</div>
<div class="t" style="left:1661.0px;top:316.4px;font-size:19px;color:#333;font-weight:700;letter-spacing:-0.3px;">167,197</div>
<div class="t" style="left:1661.0px;top:364.7px;font-size:14px;color:#3a3a3a;font-weight:700;">Ideal</div>
<div class="t" style="left:1661.0px;top:385.1px;font-size:19px;color:#333;font-weight:700;letter-spacing:1.0px;">220,884</div>
<div class="t" style="left:1661.0px;top:432.3px;font-size:14px;color:#3a3a3a;font-weight:700;">Ratio</div>
<div class="t" style="left:1661.0px;top:452.0px;font-size:19px;color:#333;font-weight:700;letter-spacing:-0.3px;">75.7 %</div>

<div class="t" style="left:1583.3px;top:534.0px;font-size:17px;color:#0d0d0d;font-weight:700;">Machine States [HH:mm:ss]</div>
<div class="t" style="left:1666.8px;top:571.7px;font-size:13.5px;color:#3a3a3a;font-weight:700;">Productive time</div>
<div class="t" style="left:1666.8px;top:591.1px;font-size:19px;color:#333;font-weight:700;">166:24:57</div>
<div class="t" style="left:1666.8px;top:639.9px;font-size:13.5px;color:#3a3a3a;font-weight:700;">Total time</div>
<div class="t" style="left:1666.8px;top:657.7px;font-size:19px;color:#333;font-weight:700;">213:00:00</div>
<div class="t" style="left:1661.1px;top:706.2px;font-size:14px;color:#3a3a3a;font-weight:700;">Ratio</div>
<div class="t" style="left:1661.1px;top:726.4px;font-size:19px;color:#333;font-weight:700;letter-spacing:-0.3px;">78.1 %</div>

<div class="t" style="left:1583.3px;top:809.2px;font-size:17px;color:#0d0d0d;font-weight:700;">Production rate [Bottles/h]</div>
<div class="t" style="left:1666.8px;top:847.1px;font-size:13.5px;color:#3a3a3a;font-weight:700;">Average</div>
<div class="t" style="left:1666.8px;top:865.6px;font-size:19.5px;color:#333;font-weight:700;">1,004.70</div>
<div class="t" style="left:1666.8px;top:914.2px;font-size:13.5px;color:#3a3a3a;font-weight:700;">Ideal prod. rate</div>
<div class="t" style="left:1666.8px;top:933.2px;font-size:19.5px;color:#333;font-weight:700;letter-spacing:-0.6px;">1,037.01</div>
<div class="t" style="left:1661.5px;top:981.3px;font-size:14px;color:#3a3a3a;font-weight:700;">Ratio</div>
<div class="t" style="left:1661.5px;top:1000.7px;font-size:19px;color:#333;font-weight:700;letter-spacing:-0.3px;">96.9 %</div>

<!-- ============ DROPDOWN ============ -->
<div class="abs" style="left:1702px;top:39.7px;width:170px;height:189.7px;border-radius:22px;background:#fff;box-shadow:0 4px 14px rgba(0,0,0,.18);overflow:hidden">
  <div class="abs" style="left:0;top:47.7px;width:170px;height:46.3px;background:#2a3994"></div>
</div>
<div class="t" style="left:1720.0px;top:55.4px;font-size:16px;color:#c9cbce;font-weight:400;letter-spacing:0.4px;">Hour</div>
<div class="t" style="left:1720.0px;top:102.9px;font-size:16px;color:#fff;font-weight:400;letter-spacing:0.5px;-webkit-text-stroke:0.5px #fff;">Day</div>
<div class="t" style="left:1720.0px;top:149.5px;font-size:16px;color:#737a80;font-weight:400;letter-spacing:0.5px;">Week</div>
<div class="t" style="left:1720.0px;top:196.5px;font-size:16px;color:#737a80;font-weight:400;letter-spacing:0.6px;">Month</div>

</body></html>
